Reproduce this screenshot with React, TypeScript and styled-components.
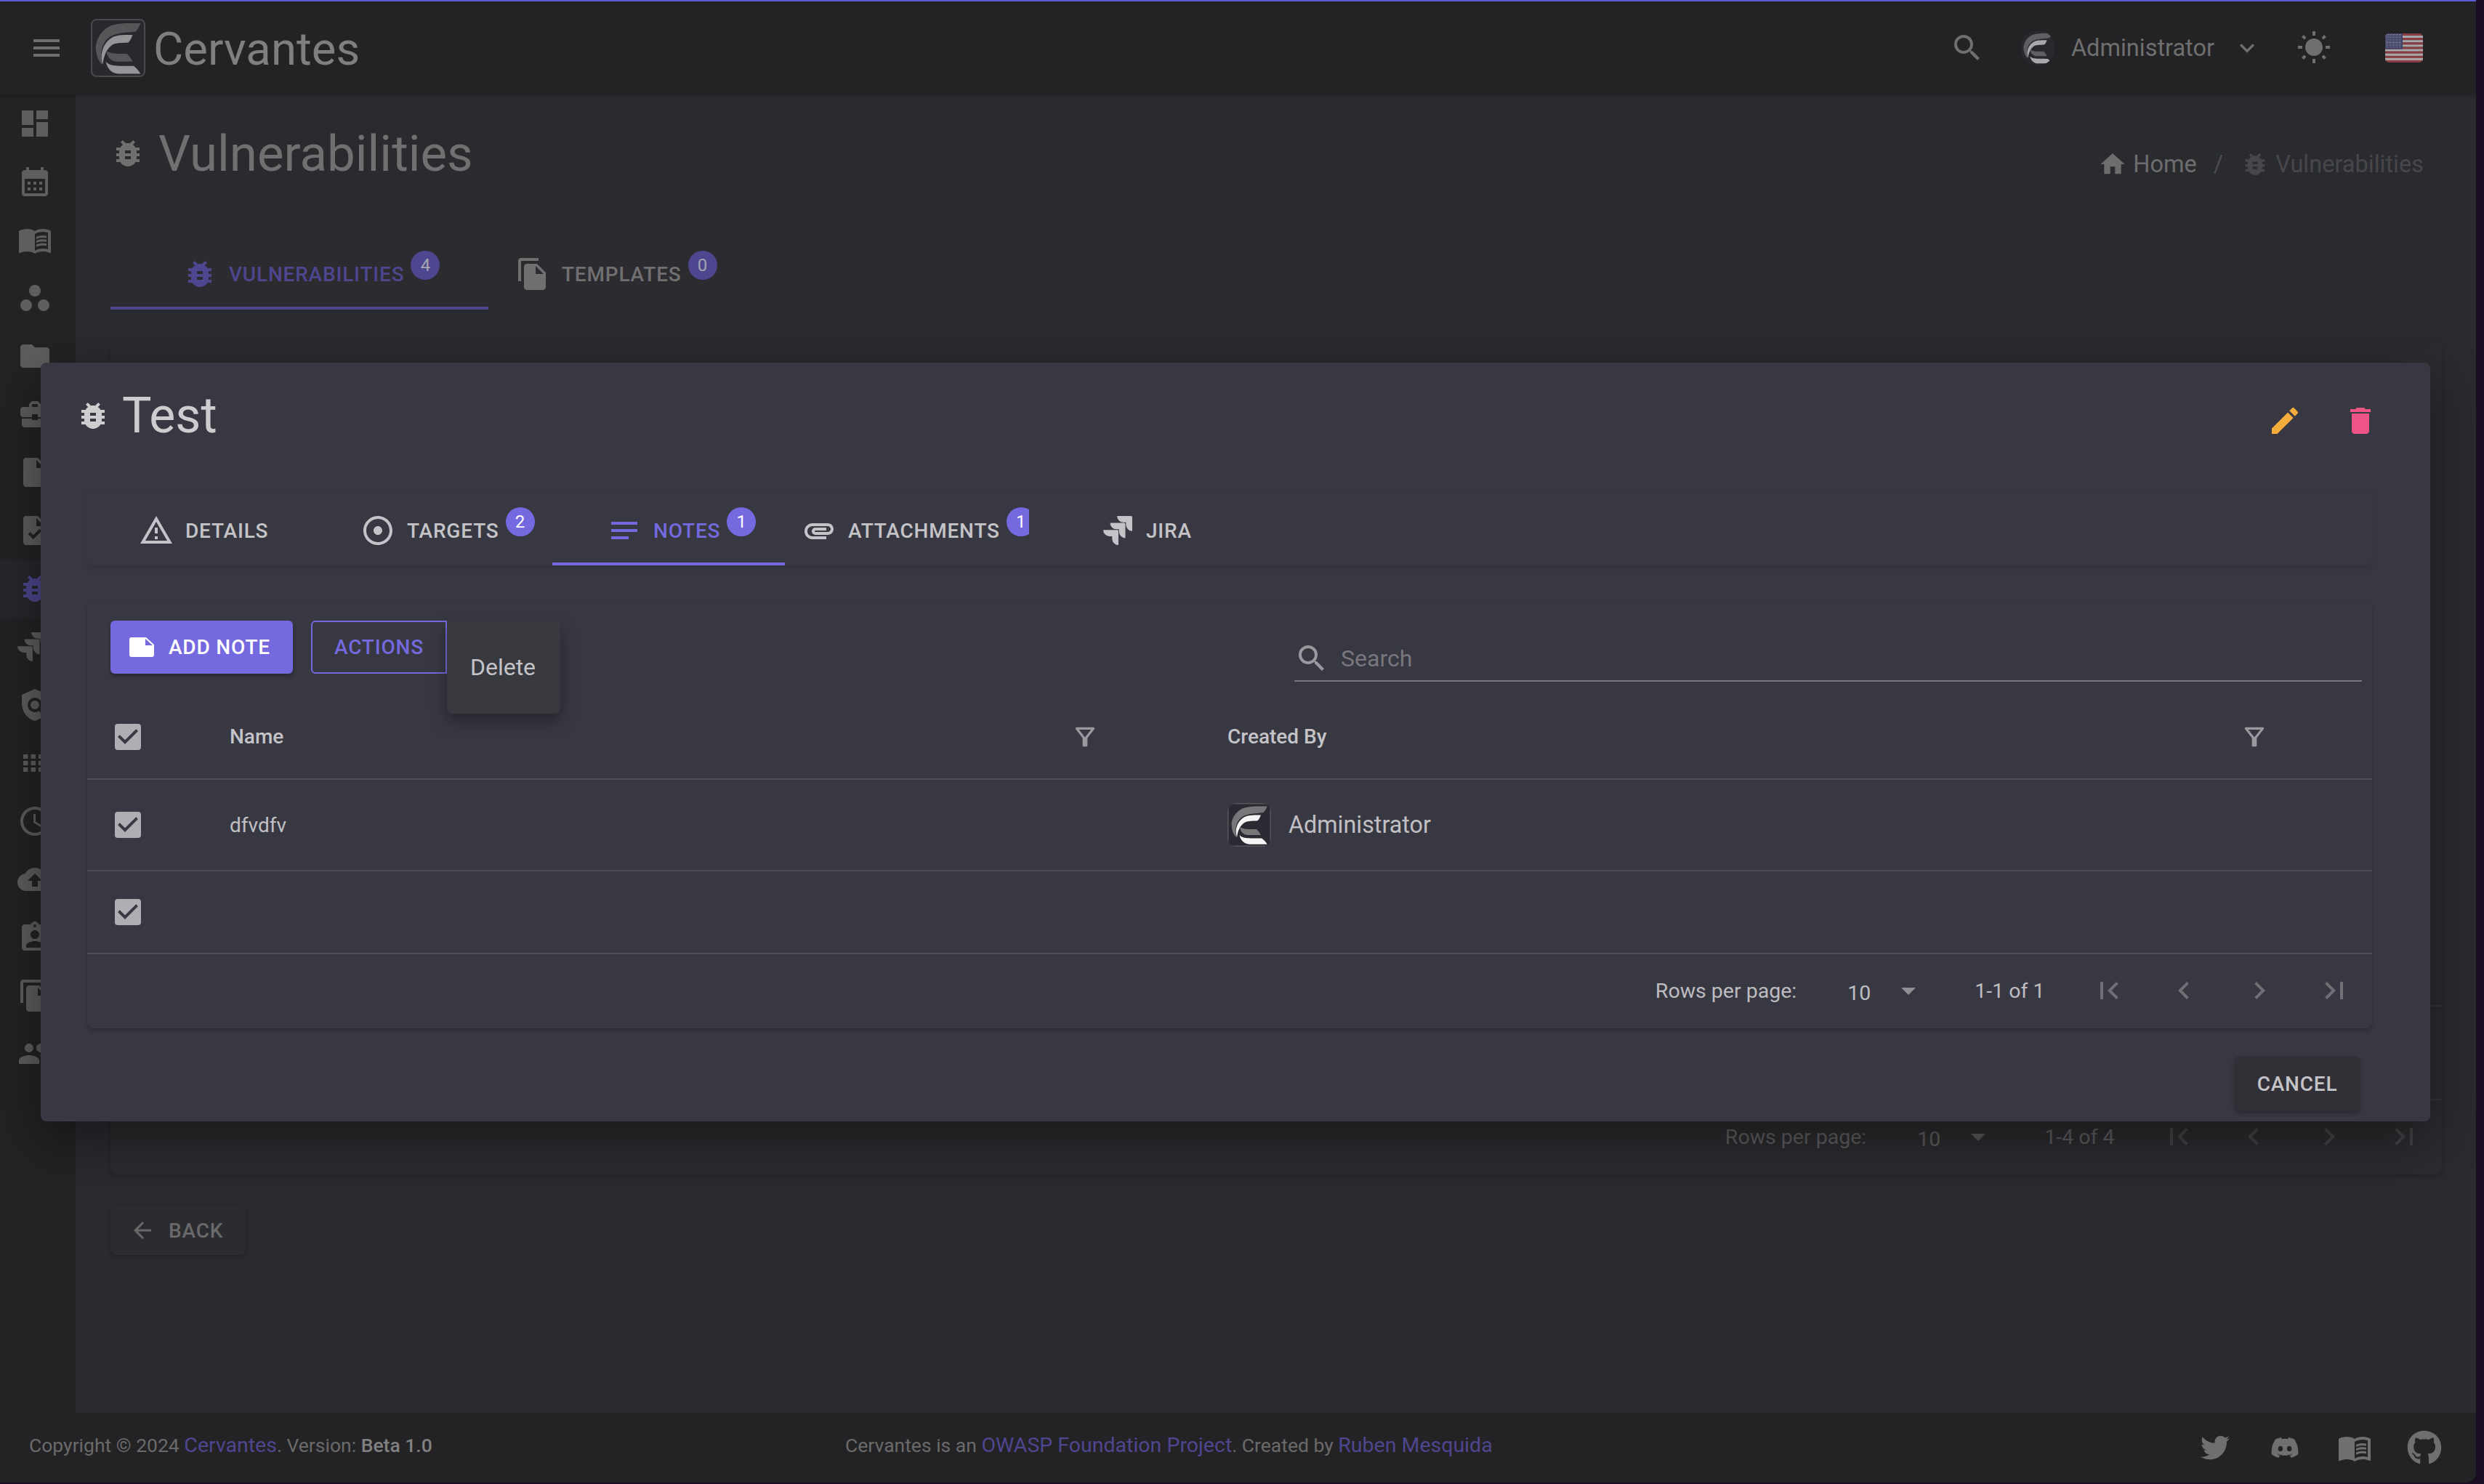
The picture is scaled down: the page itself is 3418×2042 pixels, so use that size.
import React from 'react';
import styled, { createGlobalStyle } from 'styled-components';
import {
  MdAdjust,
  MdArrowBack,
  MdArrowDropDown,
  MdAssignmentInd,
  MdAttachment,
  MdBugReport,
  MdBusinessCenter,
  MdCalendarMonth,
  MdCheckBox,
  MdChevronLeft,
  MdChevronRight,
  MdCloudUpload,
  MdDashboard,
  MdDelete,
  MdEdit,
  MdFileCopy,
  MdFirstPage,
  MdFolder,
  MdHome,
  MdInsertDriveFile,
  MdKeyboardArrowDown,
  MdLastPage,
  MdMenu,
  MdMenuBook,
  MdNotes,
  MdOutlineAccessTime,
  MdOutlineFilterAlt,
  MdOutlineWarningAmber,
  MdPeople,
  MdPolicy,
  MdSearch,
  MdTask,
  MdWbSunny,
  MdWorkspaces,
} from 'react-icons/md';
import { FaDiscord, FaGithub, FaTwitter } from 'react-icons/fa';
import { SiJira } from 'react-icons/si';

const GlobalStyle = createGlobalStyle`
  html, body {
    margin: 0;
    padding: 0;
    background: #1b0e22;
    overflow: hidden;
  }
  * {
    box-sizing: border-box;
  }
`;

const primary = '#7469de';
const primaryDim = '#4e468f';

const Logo = ({ dark, light, back, line }: { dark: string; light: string; back: string; line?: string }) => (
  <svg viewBox="73 48 225 237" width="100%" height="100%" preserveAspectRatio="none">
    <rect x="76" y="51" width="219" height="231" rx="20" fill={back} stroke={line ?? 'none'} strokeWidth="6" />
    <path d="M278 66 C230 66 180 64 150 78 C112 98 88 140 95 180 C98 205 108 225 120 235 C108 190 118 145 150 122 C178 104 220 104 258 100 C268 90 274 78 278 66Z" fill={dark} />
    <path d="M245 113 C215 113 180 112 160 124 C125 145 108 190 122 235 C126 200 138 168 165 152 C180 144 210 146 228 144 C236 136 242 124 245 113Z" fill={light} />
    <path d="M138 180 C160 192 190 190 222 190 C232 198 240 210 245 222 L178 222 C156 220 140 204 138 180Z" fill={dark} />
    <path d="M135 222 C150 240 170 240 250 240 C262 250 272 260 278 272 L186 272 C158 270 140 250 135 222Z" fill={light} />
  </svg>
);

const Flag = () => {
  const stripes = Array.from({ length: 13 }, (_, i) => i);
  const dots: [number, number][] = [];
  for (let r = 0; r < 9; r++) {
    for (let c = 0; c < 11; c++) {
      dots.push([1.5 + c * 2, 1.4 + r * 2.2]);
    }
  }
  return (
    <FlagBox>
      <svg viewBox="0 0 52 40" width="52" height="40">
        {stripes.map((i) => (
          <rect key={i} x="0" y={(i * 40) / 13} width="52" height={40 / 13 + 0.2} fill={i % 2 === 0 ? '#8a3d42' : '#a9a9ab'} />
        ))}
        <rect x="0" y="0" width="24" height="21.5" fill="#3b3f66" />
        {dots.map(([x, y]) => (
          <circle key={`${x}-${y}`} cx={x} cy={y} r="0.55" fill="#a9a9ab" />
        ))}
      </svg>
    </FlagBox>
  );
};

const NoteIcon = () => (
  <svg viewBox="0 0 34 27" width="34" height="27">
    <path d="M3 0h20l11 10v14a3 3 0 0 1-3 3H3a3 3 0 0 1-3-3V3a3 3 0 0 1 3-3z" fill="#fff" />
    <path d="M22 2v9h10z" fill={primary} />
  </svg>
);

// the sidebar's small grid of dashes, no package icon has this one
const DotsIcon = ({ size }: { size?: number }) => {
  const cells: [number, number][] = [];
  [12, 21, 30].forEach((y) => [8, 18.5, 29, 39.5].forEach((x) => cells.push([x, y])));
  return (
    <svg viewBox="0 0 48 48" width={size} height={size}>
      {cells.map(([x, y]) => (
        <rect key={`${x}-${y}`} x={x} y={y} width="6.5" height="6" fill="currentColor" />
      ))}
    </svg>
  );
};

const Pagination = ({ total, muted }: { total: string; muted?: boolean }) => (
  <PagerRow $muted={muted}>
    <span>Rows per page:</span>
    <PagerValue>10</PagerValue>
    <PagerCaret $muted={muted} size={48} />
    <PagerCount>{total}</PagerCount>
    <PagerIcons $muted={muted}>
      <MdFirstPage size={48} />
      <MdChevronLeft size={48} />
      <MdChevronRight size={48} />
      <MdLastPage size={48} />
    </PagerIcons>
  </PagerRow>
);

const sideIcons = [
  MdDashboard,
  MdCalendarMonth,
  MdMenuBook,
  MdWorkspaces,
  MdFolder,
  MdBusinessCenter,
  MdInsertDriveFile,
  MdTask,
  MdBugReport,
  SiJira,
  MdPolicy,
  DotsIcon,
  MdOutlineAccessTime,
  MdCloudUpload,
  MdAssignmentInd,
  MdFileCopy,
  MdPeople,
];

const App = () => {
  return (
    <Window>
      <GlobalStyle />
      <TopBar>
        <MdMenu size={48} />
        <LogoBox>
          <Logo dark="#565658" light="#959597" back="#28292e" line="#4a4a4d" />
        </LogoBox>
        <Brand>Cervantes</Brand>
        <TopRight>
          <MdSearch size={48} />
          <AvatarCircle>
            <Logo dark="#5f5f61" light="#a8a8aa" back="#28292e" />
          </AvatarCircle>
          <UserName>Administrator</UserName>
          <UserCaret size={40} />
          <SunIcon size={48} />
          <Flag />
        </TopRight>
      </TopBar>

      <Middle>
        <Sidebar>
          {sideIcons.map((Icon, i) => (
            <SideItem key={i} $active={i === 8}>
              <Icon size={i === 9 ? 40 : 48} />
            </SideItem>
          ))}
        </Sidebar>

        <Main>
          <TitleRow>
            <PageTitle>
              <MdBugReport size={48} />
              <span>Vulnerabilities</span>
            </PageTitle>
            <Breadcrumb>
              <CrumbHome size={40} />
              <span>Home</span>
              <CrumbSep>/</CrumbSep>
              <CrumbCurrent>
                <MdBugReport size={40} />
                <span>Vulnerabilities</span>
              </CrumbCurrent>
            </Breadcrumb>
          </TitleRow>

          <PageTabs>
            <TabItem $width={520} $pad={99} $active $dim>
              <MdBugReport size={48} />
              <span>Vulnerabilities</span>
              <Badge $dim>4</Badge>
            </TabItem>
            <TabItem $width={360} $pad={37} $dim>
              <MdFileCopy size={48} />
              <span>Templates</span>
              <Badge $dim>0</Badge>
            </TabItem>
          </PageTabs>

          <BehindCard>
            <BehindRow />
            <Pagination total="1-4 of 4" muted />
          </BehindCard>

          <BackButton>
            <MdArrowBack size={36} />
            <span>Back</span>
          </BackButton>
        </Main>
      </Middle>

      <Footer>
        <FooterText>
          Copyright © 2024 <FooterLink>Cervantes</FooterLink>. Version: <FooterBold>Beta 1.0</FooterBold>
        </FooterText>
        <FooterText>
          Cervantes is an <FooterLink>OWASP Foundation Project</FooterLink>. Created by <FooterLink>Ruben Mesquida</FooterLink>
        </FooterText>
        <FooterIcons>
          <FaTwitter size={40} />
          <FaDiscord size={40} />
          <MdMenuBook size={48} />
          <FaGithub size={48} />
        </FooterIcons>
      </Footer>

      <Modal>
        <ModalHead>
          <ModalTitle>
            <MdBugReport size={48} />
            <span>Test</span>
          </ModalTitle>
          <ModalActions>
            <MdEdit size={48} color="#f5ac3c" />
            <MdDelete size={48} color="#ef5487" />
          </ModalActions>
        </ModalHead>

        <ModalTabs>
          <TabItem $width={320} $pad={71}>
            <MdOutlineWarningAmber size={48} />
            <span>Details</span>
          </TabItem>
          <TabItem $width={320} $pad={56}>
            <MdAdjust size={48} />
            <span>Targets</span>
            <Badge>2</Badge>
          </TabItem>
          <TabItem $width={320} $pad={75} $active>
            <MdNotes size={48} />
            <span>Notes</span>
            <Badge>1</Badge>
          </TabItem>
          <TabItem $width={336} $pad={23}>
            <MdAttachment size={48} />
            <span>Attachments</span>
            <Badge>1</Badge>
          </TabItem>
          <TabItem $width={320} $pad={102}>
            <SiJira size={40} />
            <JiraLabel>Jira</JiraLabel>
          </TabItem>
        </ModalTabs>

        <TableCard>
          <Toolbar>
            <AddButton>
              <NoteIcon />
              <span>Add Note</span>
            </AddButton>
            <ActionsButton>Actions</ActionsButton>
            <SearchBox>
              <MdSearch size={48} />
              <span>Search</span>
            </SearchBox>
            <ActionsMenu>Delete</ActionsMenu>
          </Toolbar>

          <TableRow $height={116}>
            <MdCheckBox size={48} color="#aeaeb3" />
            <HeadCell>
              <span>Name</span>
              <MdOutlineFilterAlt size={40} />
            </HeadCell>
            <HeadCell $last>
              <span>Created By</span>
              <MdOutlineFilterAlt size={40} />
            </HeadCell>
          </TableRow>
          <TableRow $height={126}>
            <MdCheckBox size={48} color="#aeaeb3" />
            <NameCell>dfvdfv</NameCell>
            <UserCell>
              <AvatarSquare>
                <Logo dark="#77777a" light="#f4f4f4" back="#2a2b32" line="#55555a" />
              </AvatarSquare>
              <span>Administrator</span>
            </UserCell>
          </TableRow>
          <TableRow $height={114}>
            <MdCheckBox size={48} color="#aeaeb3" />
          </TableRow>
          <Pagination total="1-1 of 1" />
        </TableCard>

        <ModalFoot>
          <CancelButton>Cancel</CancelButton>
        </ModalFoot>
      </Modal>
    </Window>
  );
};

const Window = styled.div`
  position: relative;
  width: 3407px;
  height: 2040px;
  display: flex;
  flex-direction: column;
  overflow: hidden;
  border-bottom-right-radius: 14px;
  background: #232325;
  font-family: Roboto, "Liberation Sans", sans-serif;
`;
const TopBar = styled.header`
  flex: none;
  height: 130px;
  display: flex;
  align-items: center;
  padding: 0 73px 0 40px;
  border-top: 2px solid #5a5bd6;
  color: #6f6f70;
  box-shadow: 0 2px 4px rgba(0, 0, 0, 0.2);
  z-index: 1;
`;
const LogoBox = styled.div`
  width: 75px;
  height: 80px;
  margin-left: 37px;
  flex: none;
`;
const Brand = styled.div`
  margin: 3px 0 0 11px;
  font-size: 63.5px;
  line-height: 1;
  color: #7f7f80;
`;
const TopRight = styled.div`
  margin-left: auto;
  display: flex;
  align-items: center;
`;
const AvatarCircle = styled.div`
  width: 48px;
  height: 48px;
  margin-left: 49px;
  border-radius: 50%;
  overflow: hidden;
`;
const UserName = styled.div`
  margin-left: 22px;
  font-size: 32.5px;
  color: #6f6f70;
`;
const UserCaret = styled(MdKeyboardArrowDown)`
  margin-left: 25px;
`;
const SunIcon = styled(MdWbSunny)`
  margin-left: 48px;
`;
const FlagBox = styled.div`
  display: flex;
  margin-left: 74px;
  border-radius: 5px;
  overflow: hidden;
`;
const Middle = styled.div`
  flex: 1;
  display: flex;
  min-height: 0;
`;
const Sidebar = styled.nav`
  flex: none;
  width: 104px;
  display: flex;
  flex-direction: column;
  background: #232325;
  box-shadow: 2px 0 4px rgba(0, 0, 0, 0.12);
`;
const SideItem = styled.div<{ $active?: boolean }>`
  height: 80px;
  flex: none;
  display: flex;
  align-items: center;
  justify-content: flex-start;
  padding-left: 24px;
  color: ${(p) => (p.$active ? primaryDim : '#5e5e5f')};
  background: ${(p) => (p.$active ? '#26262c' : 'transparent')};
`;
const Main = styled.main`
  flex: 1;
  display: flex;
  flex-direction: column;
  padding: 0 47px 0 48px;
  background: #2a2b2f;
`;
const TitleRow = styled.div`
  height: 200px;
  flex: none;
  display: flex;
  justify-content: space-between;
  padding: 42px 25px 0 0;
`;
const PageTitle = styled.h1`
  margin: 0;
  display: flex;
  align-items: center;
  gap: 18px;
  height: 78px;
  font-size: 69px;
  font-weight: 400;
  color: #707071;
`;
const Breadcrumb = styled.div`
  display: flex;
  align-items: center;
  height: 78px;
  margin-top: 15px;
  font-size: 32.5px;
  color: #6d6d6e;
`;
const CrumbHome = styled(MdHome)`
  margin-right: 8px;
`;
const CrumbSep = styled.span`
  margin: 0 24px 0 23px;
  color: #4c4c50;
`;
const CrumbCurrent = styled.span`
  display: flex;
  align-items: center;
  gap: 8px;
  color: #47474b;
`;
const PageTabs = styled.div`
  flex: none;
  height: 96px;
  display: flex;
  background: #2c2c30;
  border-radius: 8px;
  & > div {
    padding-top: 2px;
  }
`;
const ModalTabs = styled.div`
  flex: none;
  height: 103px;
  display: flex;
  border-radius: 8px;
  background: #383842;
  box-shadow: 0 4px 10px rgba(0, 0, 0, 0.1);
  & > div {
    padding-top: 11px;
  }
`;
const TabItem = styled.div<{ $width: number; $pad: number; $active?: boolean; $dim?: boolean }>`
  flex: none;
  width: ${(p) => p.$width}px;
  padding-left: ${(p) => p.$pad}px;
  display: flex;
  align-items: center;
  overflow: hidden;
  border-bottom: 4px solid ${(p) => (p.$active ? (p.$dim ? primaryDim : primary) : 'transparent')};
  font-size: 28px;
  font-weight: 500;
  letter-spacing: 0.8px;
  text-transform: uppercase;
  color: ${(p) => (p.$active ? (p.$dim ? primaryDim : primary) : p.$dim ? '#707071' : '#c4c4c8')};
  svg {
    flex: none;
    margin-right: 16px;
  }
`;
const JiraLabel = styled.span`
  margin-left: 3px;
`;
const Badge = styled.span<{ $dim?: boolean }>`
  position: relative;
  top: -12px;
  flex: none;
  width: 40px;
  height: 40px;
  margin-left: 9px;
  border-radius: 50%;
  display: flex;
  align-items: center;
  justify-content: center;
  font-size: 24px;
  font-weight: 400;
  letter-spacing: 0;
  background: ${(p) => (p.$dim ? primaryDim : primary)};
  color: ${(p) => (p.$dim ? '#a5a5b0' : '#fff')};
`;
const BehindCard = styled.section`
  flex: none;
  height: 1143px;
  margin-top: 47px;
  display: flex;
  flex-direction: column;
  justify-content: flex-end;
  background: #2c2c30;
  border-radius: 8px;
  box-shadow: 0 2px 4px rgba(0, 0, 0, 0.2);
`;
const BehindRow = styled.div`
  height: 131px;
  border-top: 2px solid #36363a;
  border-bottom: 2px solid #36363a;
`;
const BackButton = styled.div`
  align-self: flex-start;
  margin-top: 43px;
  width: 186px;
  height: 68px;
  display: flex;
  align-items: center;
  gap: 18px;
  padding-left: 26px;
  font-size: 28px;
  font-weight: 500;
  letter-spacing: 0.8px;
  text-transform: uppercase;
  color: #69696a;
  background: #2b2c30;
  border-radius: 8px;
  box-shadow: 0 2px 4px rgba(0, 0, 0, 0.25);
`;
const PagerRow = styled.div<{ $muted?: boolean }>`
  flex: none;
  height: 102px;
  display: flex;
  align-items: center;
  justify-content: flex-end;
  padding: 0 28px 2px 0;
  font-size: 28.5px;
  color: ${(p) => (p.$muted ? '#5f5f60' : '#bdbdc1')};
`;
const PagerValue = styled.span`
  margin: 6px 0 0 70px;
`;
const PagerCaret = styled(MdArrowDropDown)<{ $muted?: boolean }>`
  margin-left: 28px;
  color: ${(p) => (p.$muted ? '#5a5a5b' : '#8f8f93')};
`;
const PagerCount = styled.span`
  margin: 0 64px 0 67px;
`;
const PagerIcons = styled.div<{ $muted?: boolean }>`
  display: flex;
  gap: 55.5px;
  color: ${(p) => (p.$muted ? '#444447' : '#6f6f74')};
`;
const Footer = styled.footer`
  flex: none;
  height: 96px;
  display: grid;
  grid-template-columns: 1123px auto 1fr;
  align-items: center;
  padding: 0 47px 0 40px;
  background: #232325;
  color: #6a6a6b;
`;
const FooterText = styled.div`
  font-size: 26.5px;
  white-space: nowrap;
  margin-bottom: 8px;
`;
const FooterLink = styled.span`
  font-size: 28.5px;
  color: ${primaryDim};
`;
const FooterBold = styled.b`
  font-weight: 500;
  color: #808081;
`;
const FooterIcons = styled.div`
  display: grid;
  grid-auto-flow: column;
  grid-auto-columns: 48px;
  gap: 48px;
  justify-content: end;
  align-items: center;
  justify-items: center;
  color: #6f6f70;
`;
const Modal = styled.div`
  position: absolute;
  top: 499px;
  left: 56px;
  width: 3288px;
  height: 1044px;
  display: flex;
  flex-direction: column;
  padding: 0 80px 0 64px;
  background: #383842;
  border-radius: 8px;
  box-shadow: 0 24px 76px rgba(0, 0, 0, 0.45);
  color: #c4c4c8;
  z-index: 2;
`;
const ModalHead = styled.div`
  flex: none;
  height: 176px;
  display: flex;
  justify-content: space-between;
  padding-top: 34px;
  margin: 0 -8px 0 -16px;
`;
const ModalTitle = styled.h2`
  margin: 0;
  display: flex;
  align-items: center;
  gap: 16px;
  height: 78px;
  font-size: 68px;
  font-weight: 400;
  color: #cdcdd0;
`;
const ModalActions = styled.div`
  display: flex;
  gap: 56px;
  margin-top: 22px;
  align-self: flex-start;
`;
const TableCard = styled.section`
  flex: none;
  height: 588px;
  margin-top: 49px;
  display: flex;
  flex-direction: column;
  border-radius: 8px;
  box-shadow: 0 3px 5px rgba(0, 0, 0, 0.22);
`;
const Toolbar = styled.div`
  position: relative;
  flex: none;
  height: 130px;
  display: flex;
  align-items: flex-start;
  padding: 27px 14px 0 32px;
`;
const AddButton = styled.div`
  width: 251px;
  height: 73px;
  display: flex;
  align-items: center;
  gap: 20px;
  padding-left: 26px;
  border-radius: 6px;
  background: ${primary};
  color: #fff;
  font-size: 28px;
  font-weight: 500;
  letter-spacing: 0.8px;
  text-transform: uppercase;
  box-shadow: 0 3px 5px rgba(0, 0, 0, 0.3);
`;
const ActionsButton = styled.div`
  width: 187px;
  height: 73px;
  margin-left: 25px;
  padding-left: 30px;
  display: flex;
  align-items: center;
  border: 2px solid ${primary};
  border-radius: 6px 0 0 6px;
  color: ${primary};
  font-size: 28px;
  font-weight: 500;
  letter-spacing: 0.8px;
  text-transform: uppercase;
`;
const ActionsMenu = styled.div`
  position: absolute;
  top: 27px;
  left: 495px;
  width: 156px;
  height: 128px;
  display: flex;
  align-items: center;
  justify-content: center;
  padding-right: 2px;
  border-radius: 8px;
  background: #38383f;
  color: #c4c4c8;
  font-size: 32px;
  box-shadow: 0 10px 22px rgba(0, 0, 0, 0.35);
`;
const SearchBox = styled.div`
  width: 1469px;
  height: 62px;
  margin: 22px 0 0 auto;
  display: flex;
  align-items: center;
  gap: 16px;
  border-bottom: 2px solid #77777c;
  color: #9a9a9e;
  span {
    font-size: 32px;
    color: #77777c;
  }
`;
const TableRow = styled.div<{ $height: number }>`
  flex: none;
  height: ${(p) => p.$height}px;
  display: grid;
  grid-template-columns: 164px 1373px 1fr;
  align-items: center;
  padding-left: 32px;
  border-bottom: 2px solid #4e4e54;
`;
const HeadCell = styled.div<{ $last?: boolean }>`
  display: flex;
  align-items: center;
  justify-content: space-between;
  padding-right: ${(p) => (p.$last ? 142 : 176)}px;
  font-size: 28px;
  font-weight: 500;
  color: #c4c4c8;
  span {
    margin-bottom: 2px;
  }
  svg {
    color: #9a9a9e;
  }
`;
const NameCell = styled.div`
  font-size: 28px;
  color: #c0c0c4;
`;
const UserCell = styled.div`
  display: flex;
  align-items: center;
  gap: 24px;
  font-size: 32.3px;
  color: #c0c0c4;
`;
const AvatarSquare = styled.div`
  width: 60px;
  height: 60px;
  border-radius: 12px;
  overflow: hidden;
`;
const ModalFoot = styled.div`
  display: flex;
  justify-content: flex-end;
  padding: 39px 16px 0 0;
`;
const CancelButton = styled.div`
  width: 174px;
  height: 75px;
  display: flex;
  align-items: center;
  justify-content: center;
  border-radius: 8px;
  background: #303036;
  font-size: 28px;
  font-weight: 500;
  letter-spacing: 0.8px;
  text-transform: uppercase;
  color: #c4c4c8;
  box-shadow: 0 3px 5px rgba(0, 0, 0, 0.25);
`;

export default App;
